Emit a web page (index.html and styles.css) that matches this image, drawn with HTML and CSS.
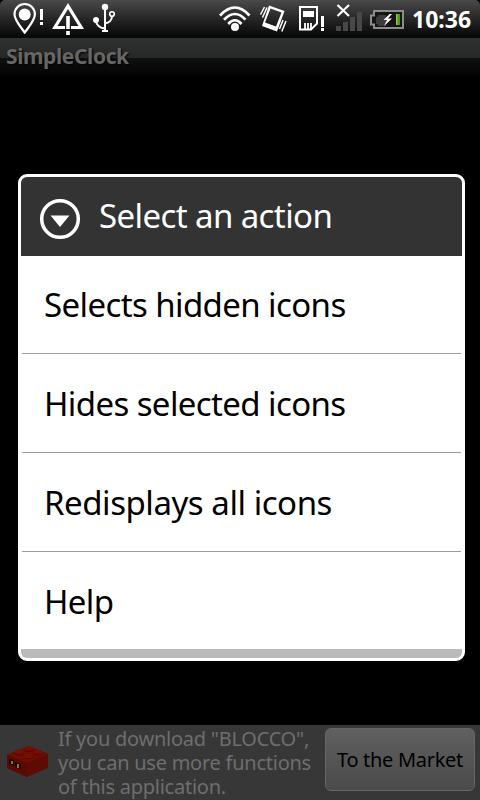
FILE: index.html
```html
<!DOCTYPE html>
<html lang="en">
<head>
    <meta charset="utf-8">
    <title>SimpleClock</title>
    <link rel="stylesheet" href="styles.css">
</head>
<body>
<div class="screen">
    <div class="status-bar">
        <div class="notifications">
            <svg width="31" height="38" viewBox="13 0 31 38">
                <path d="M24.7 32.5C20 26 14.5 20 14.5 14.2a10.2 10.2 0 0 1 20.4 0C34.9 20 29.5 26 24.7 32.5Z" fill="none" stroke="#fff" stroke-width="2.2"/>
                <circle cx="24.7" cy="14.5" r="6" fill="#fff"/>
                <path d="M40 9h3v11h-3zM40 22h3v3h-3z" fill="#fff"/>
            </svg>
            <svg width="32" height="38" viewBox="51 0 32 38">
                <path d="M67 3L83 29H70V26H77.500L67 9L56.500 26H64V29H51Z" fill="#fff"/>
                <path d="M65.200 16h3.600v13h-3.600zM65.200 31h3.600v4h-3.600z" fill="#fff"/>
            </svg>
            <svg width="24" height="38" viewBox="91 0 24 38">
                <path d="M104 6v25M95 20c0 5 4 8 9 8.500M111 16c0 4-3 7-7 7.500" fill="none" stroke="#fff" stroke-width="2"/>
                <circle cx="104" cy="7" r="3.200" fill="#fff"/>
                <circle cx="95" cy="20" r="3" fill="#fff"/>
                <circle cx="111" cy="14" r="2.300" fill="none" stroke="#fff" stroke-width="1.600"/>
                <path d="M101 30h6v2h-6z" fill="#fff"/>
            </svg>
        </div>
        <div class="system-icons">
            <svg width="32" height="38" viewBox="219 0 32 38">
                <g fill="none" stroke="#fff" stroke-width="2.700">
                    <path d="M220 15.500Q235 -0.500 249.500 15.500"/>
                    <path d="M224 19.700Q235 8.300 245.500 19.700"/>
                    <path d="M228.200 24Q235 16.500 241.500 24"/>
                </g>
                <circle cx="235" cy="27" r="4" fill="#fff"/>
            </svg>
            <svg width="28" height="38" viewBox="259 0 28 38">
                <path d="M269 5.500L284.500 11L277 31.500L262 26ZM270.500 8.500L265 22.500L276 26.500L281.500 12.500Z" fill="#fff" fill-rule="evenodd"/>
                <path d="M264.500 7L260.500 14.500M267 7.500L262.500 17.500M286 21L281.800 31.500M283 20L279.500 29" fill="none" stroke="#fff" stroke-width="1.500"/>
            </svg>
            <svg class="sim" width="27" height="38" viewBox="298 0 27 38">
                <path d="M300 7h17v16.500l-6 6h-11z" fill="none" stroke="#fff" stroke-width="2"/>
                <path d="M303 11h11v6h-11z" fill="#fff"/>
                <path d="M305 23v6M308 23v6M311 23v6" stroke="#fff" stroke-width="1.800"/>
                <path d="M321 16h3v11h-3zM321 28h3v3h-3z" fill="#fff"/>
            </svg>
            <svg class="signal" width="27" height="38" viewBox="336 0 27 38">
                <path d="M336 26h5v5h-5zM343 22h5v9h-5zM350 17h5v14h-5zM357 12h5v19h-5z" fill="#484848"/>
                <path d="M337.500 5L349 16M349 5L337.500 16" stroke="#fff" stroke-width="2.200"/>
            </svg>
            <svg width="34" height="38" viewBox="370 0 34 38">
                <path d="M374 11h29v17h-29v-3.500h-3v-9h3z" fill="#151515" stroke="#8d8d8d" stroke-width="2"/>
                <path d="M376 17h2v-2h8v11h-8v-2h-2z" fill="#3c3c3c"/>
                <path d="M396 14h4v11h-4z" fill="#4e9a12"/>
                <path d="M396 14h1.500v11h-1.500z" fill="#8fc944"/>
                <path d="M389.500 14L383.500 20H387L384 26L392 18.500H388L392 14Z" fill="#fff"/>
            </svg>
            <span class="time">10:36</span>
        </div>
    </div>
    <div class="title-bar">SimpleClock</div>

    <div class="content">
        <div class="dialog">
            <div class="dialog-title">
                <svg width="44" height="44" viewBox="0 0 44 44">
                    <circle cx="22" cy="22" r="18.300" fill="none" stroke="#fff" stroke-width="3.500"/>
                    <path d="M12.500 18.500h19L22 30z" fill="#fff"/>
                </svg>
                <span class="title-text">Select an action</span>
            </div>
            <ul class="actions">
                <li>Selects hidden icons</li>
                <li>Hides selected icons</li>
                <li>Redisplays all icons</li>
                <li>Help</li>
            </ul>
            <div class="dialog-footer"></div>
        </div>
    </div>

    <div class="ad">
        <svg class="brick" width="42" height="34" viewBox="0 0 42 34">
            <path d="M0 10L22 1L41 9V23L20 32L0 23Z" fill="#5e0b02"/>
            <path d="M0 10L22 1L41 9L20 18Z" fill="#6e0e03"/>
            <path d="M0 10L20 18V32L0 23Z" fill="#5a0a02"/>
            <g fill="#540902">
                <ellipse cx="22" cy="4.500" rx="4.500" ry="2.500"/>
                <ellipse cx="12" cy="8" rx="4.500" ry="2.500"/>
                <ellipse cx="31" cy="8" rx="4.500" ry="2.500"/>
                <ellipse cx="21" cy="12" rx="4.500" ry="2.500"/>
            </g>
            <g fill="#780f04">
                <ellipse cx="22" cy="3.500" rx="4.500" ry="2.300"/>
                <ellipse cx="12" cy="7" rx="4.500" ry="2.300"/>
                <ellipse cx="31" cy="7" rx="4.500" ry="2.300"/>
                <ellipse cx="21" cy="11" rx="4.500" ry="2.300"/>
            </g>
            <path d="M2 14l5 1v6l-5-2zM8 17l6 2v5l-6-2z" fill="#140500"/>
            <path d="M4 16h2v3h-2zM10 19h2v4h-2z" fill="#8c7818"/>
        </svg>
        <p class="ad-text">If you download "BLOCCO",<br>you can use more functions<br>of this application.</p>
        <button class="market">To the Market</button>
    </div>
</div>
</body>
</html>
```

FILE: styles.css
```css
* {
    margin: 0;
    padding: 0;
    box-sizing: border-box;
    font-family: 'Noto Sans', sans-serif;
}

body {
    background: #000;
}

.screen {
    display: flex;
    flex-direction: column;
    width: 480px;
    height: 800px;
    overflow: hidden;
    background: #000;
}

svg {
    display: block;
    flex-shrink: 0;
}

.status-bar {
    display: flex;
    justify-content: space-between;
    height: 38px;
    padding: 0 8px 0 13px;
    border-radius: 5px 5px 0 0;
    background: linear-gradient(#4a4a4a, #292929 45%, #050505);
}

.notifications {
    display: flex;
    gap: 8px;
}

.system-icons {
    display: flex;
    gap: 8px;
}

.sim {
    margin: 0 3px;
}

.signal {
    margin-right: -1px;
}

.time {
    width: 60px;
    color: #fff;
    font-size: 23px;
    font-weight: bold;
    line-height: 38px;
    white-space: nowrap;
}

.title-bar {
    height: 37px;
    padding-left: 6px;
    color: #666;
    font-size: 21px;
    font-weight: bold;
    line-height: 37px;
    letter-spacing: -0.4px;
    text-shadow: 1px 1px 2px #000;
    background: linear-gradient(#303131, #262727 20px, #0f1010 20px, #040404);
}

.content {
    flex: 1;
    padding: 99px 15px 0 18px;
}

.dialog {
    height: 487px;
    border: 3px solid #fff;
    border-radius: 9px;
    background: #fff;
    overflow: hidden;
}

.dialog-title {
    display: flex;
    align-items: center;
    height: 79px;
    padding: 5px 0 0 17px;
    color: #fff;
    font-size: 33px;
    letter-spacing: -0.6px;
    background: #333;
}

.title-text {
    margin: -8px 0 0 17px;
    white-space: nowrap;
}

.actions {
    list-style: none;
    margin: 0 1px;
}

.actions li {
    height: 99px;
    padding-left: 22px;
    border-bottom: 1px solid #9c9c9c;
    font-size: 33px;
    line-height: 100px;
    letter-spacing: -0.6px;
    white-space: nowrap;
}

.actions li:first-child {
    height: 98px;
    line-height: 98px;
}

.actions li:nth-child(3) {
    letter-spacing: -0.45px;
}

.actions li:last-child {
    height: 97px;
    border-bottom: none;
}

.dialog-footer {
    height: 9px;
    background: #bababa;
}

.ad {
    display: flex;
    height: 75px;
    background: #373737;
}

.brick {
    margin: 20px 0 0 7px;
}

.ad-text {
    width: 276px;
    padding: 2px 0 0 9px;
    color: #6e6e6e;
    font-size: 20px;
    line-height: 24px;
    letter-spacing: -0.25px;
    white-space: nowrap;
}

.market {
    width: 150px;
    height: 63px;
    margin-top: 3px;
    border: 1px solid #666;
    border-radius: 6px;
    background: linear-gradient(#606060, #4a4a4a);
    color: #000;
    font-size: 20px;
    letter-spacing: -0.3px;
    white-space: nowrap;
}
```
